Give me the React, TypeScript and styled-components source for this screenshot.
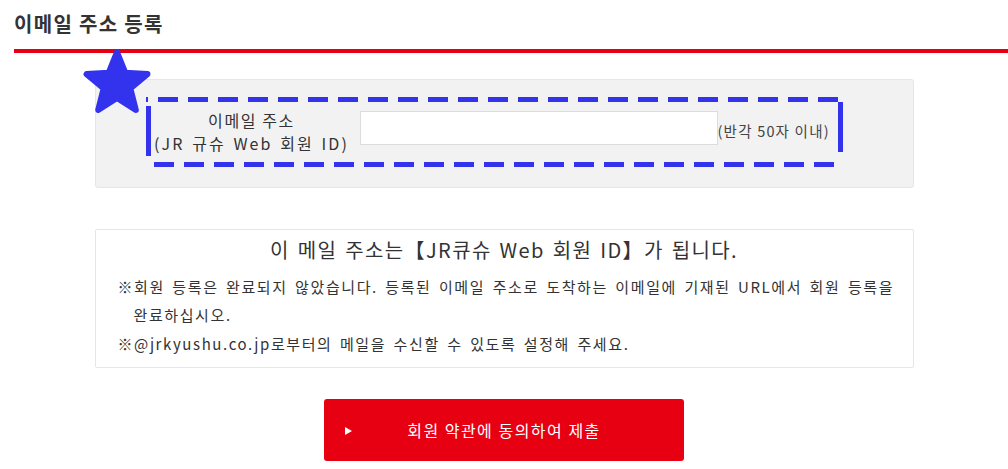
import React from 'react';
import styled, { createGlobalStyle } from 'styled-components';

const GlobalStyle = createGlobalStyle`
  html, body {
    margin: 0;
    padding: 0;
    background: #ffffff;
  }
  body {
    font-family: "Noto Sans CJK KR", "Noto Sans", sans-serif;
    color: #333333;
    word-break: keep-all;
  }
  * {
    box-sizing: border-box;
  }
`;

const markBlue = '#3333ee';

const Page = styled.div`
  position: relative;
  width: 1008px;
  padding: 0 14px 8px;
`;

const Header = styled.h1`
  margin: 0 -14px 0 0;
  padding: 10px 0 11px;
  font-size: 20px;
  line-height: 28px;
  font-weight: 700;
  letter-spacing: 1.3px;
  color: #333333;
  border-bottom: 4px solid #e60012;
`;

const FormPanel = styled.div`
  width: 819px;
  height: 109px;
  margin: 26px auto 0;
  padding: 17px 0 0 50px;
  background: #f2f2f2;
  border: 1px solid #e6e6e6;
  border-radius: 3px;
`;

// highlight frame drawn as dashes (20px dash / 10px gap, 5px thick)
const FieldRow = styled.div`
  display: flex;
  align-items: center;
  width: 697px;
  height: 70px;
  padding: 5px;
  background:
    linear-gradient(90deg, ${markBlue} 0 20px, transparent 20px) 12px 0 / 30px 5px repeat-x,
    linear-gradient(90deg, ${markBlue} 0 20px, transparent 20px) 8px 100% / 30px 5px repeat-x,
    linear-gradient(180deg, transparent 0 9px, ${markBlue} 9px 59px, transparent 59px) 0 0 / 5px 100% no-repeat,
    linear-gradient(180deg, transparent 0 5px, ${markBlue} 5px 55px, transparent 55px) 100% 0 / 5px 100% no-repeat;
`;

const FieldLabel = styled.label`
  width: 202px;
  margin-right: 7px;
  text-align: center;
  font-size: 16px;
  line-height: 23px;
  letter-spacing: 1.6px;
  color: #333333;
`;

const LatinPart = styled.span`
  letter-spacing: 2.1px;
  word-spacing: 2px;
`;

const TextInput = styled.input`
  width: 358px;
  height: 34px;
  margin-bottom: 8px;
  border: 1px solid #dcdcdc;
  background: #ffffff;
  outline: none;
  font-size: 15px;
  padding: 0 8px;
`;

const FieldNote = styled.span`
  font-size: 14.5px;
  line-height: 20px;
  letter-spacing: 1.2px;
  color: #444444;
  margin-bottom: 2px;
  white-space: nowrap;
`;

const InfoPanel = styled.div`
  width: 819px;
  margin: 41px auto 0;
  padding: 5px 10px 8px 38px;
  background: #ffffff;
  border: 1px solid #e6e6e6;
  border-radius: 2px;
`;

const InfoTitle = styled.p`
  margin: 0 0 8px -28px;
  text-align: center;
  font-size: 20px;
  line-height: 30px;
  letter-spacing: 1.4px;
  word-spacing: 2px;
  color: #333333;
`;

const Notice = styled.p`
  margin: 0 0 1px;
  text-indent: -16px;
  font-size: 15px;
  line-height: 28px;
  letter-spacing: 1.6px;
  word-spacing: 2.5px;
  color: #333333;
`;

const ButtonWrap = styled.div`
  display: flex;
  justify-content: center;
  margin-top: 31px;
`;

const SubmitButton = styled.button`
  position: relative;
  width: 360px;
  height: 62px;
  border: none;
  border-radius: 3px;
  background: #e60012;
  color: #ffffff;
  font-family: "Noto Sans CJK KR", "Noto Sans", sans-serif;
  font-size: 16px;
  letter-spacing: 1.5px;
  cursor: pointer;

  &::before {
    content: '';
    position: absolute;
    left: 21px;
    top: 28px;
    border-style: solid;
    border-width: 4px 0 4px 7px;
    border-color: transparent transparent transparent #ffffff;
  }
`;

const StarMark = styled.svg`
  position: absolute;
  left: 81px;
  top: 48px;
  width: 72px;
  height: 72px;
`;

const starPoints = (() => {
  const pts: string[] = [];
  for (let i = 0; i < 10; i++) {
    const r = i % 2 === 0 ? 32 : 14;
    const a = (-90 + i * 36) * (Math.PI / 180);
    pts.push(`${(r * Math.cos(a)).toFixed(2)},${(r * Math.sin(a)).toFixed(2)}`);
  }
  return pts.join(' ');
})();

const App: React.FC = () => {
  return (
    <>
      <GlobalStyle />
      <Page>
        <Header>이메일 주소 등록</Header>

        <FormPanel>
          <FieldRow>
            <FieldLabel htmlFor="mail">
              이메일 주소
              <br />
              <LatinPart>(JR 규슈 Web 회원 ID)</LatinPart>
            </FieldLabel>
            <TextInput id="mail" type="text" />
            <FieldNote>(반각 50자 이내)</FieldNote>
          </FieldRow>
        </FormPanel>

        <InfoPanel>
          <InfoTitle>이 메일 주소는【JR큐슈 Web 회원 ID】가 됩니다.</InfoTitle>
          <Notice>
            ※회원 등록은 완료되지 않았습니다. 등록된 이메일 주소로 도착하는 이메일에 기재된 URL에서 회원 등록을 완료하십시오.
          </Notice>
          <Notice>※@jrkyushu.co.jp로부터의 메일을 수신할 수 있도록 설정해 주세요.</Notice>
        </InfoPanel>

        <ButtonWrap>
          <SubmitButton type="button">회원 약관에 동의하여 제출</SubmitButton>
        </ButtonWrap>

        <StarMark viewBox="-36 -36 72 72">
          <polygon
            points={starPoints}
            fill={markBlue}
            stroke={markBlue}
            strokeWidth={6}
            strokeLinejoin="round"
          />
        </StarMark>
      </Page>
    </>
  );
};

export default App;
